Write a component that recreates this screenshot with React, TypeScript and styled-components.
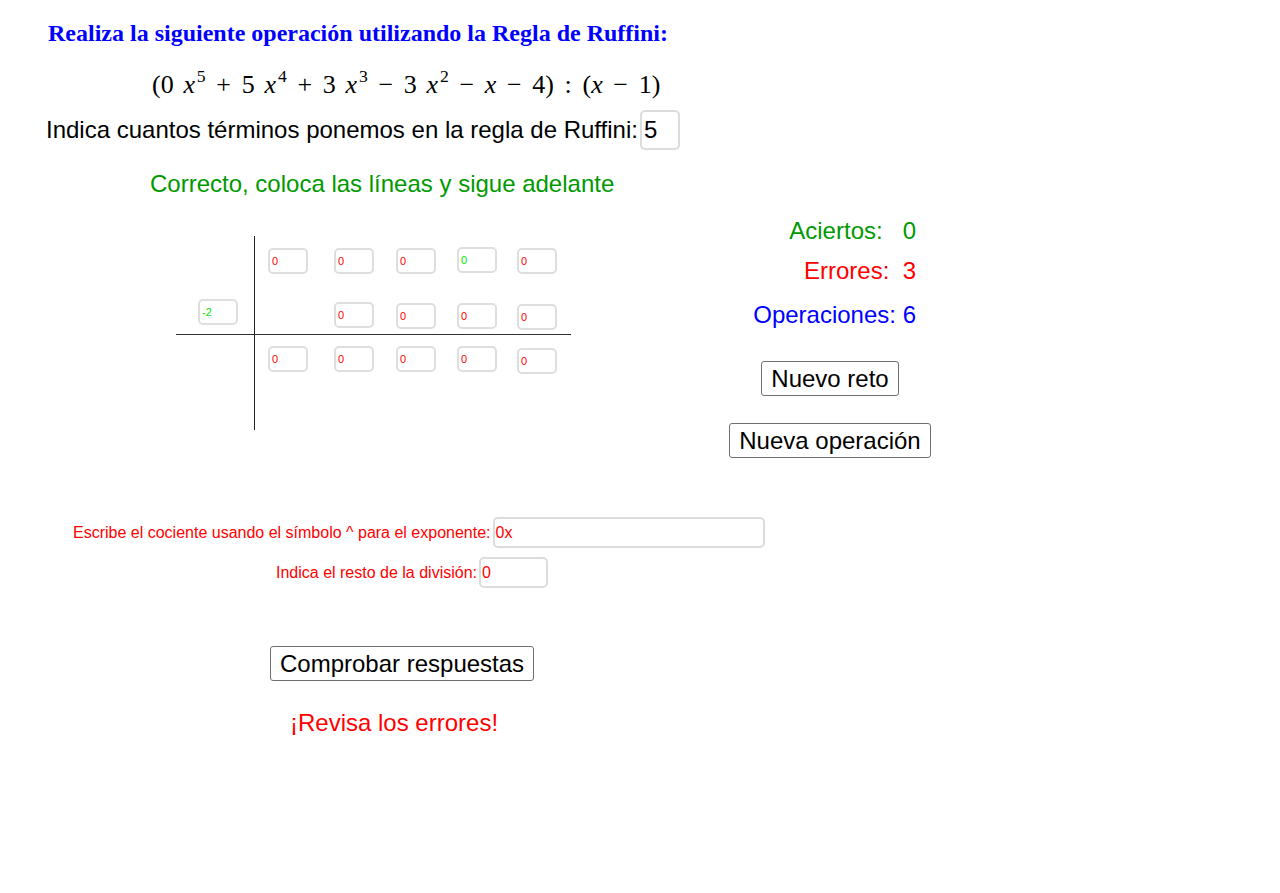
import React from 'react';
import styled, { createGlobalStyle } from 'styled-components';

const GlobalStyle = createGlobalStyle`
  html, body {
    margin: 0;
    padding: 0;
    background: #fff;
  }
  body {
    font-family: "Liberation Sans", Arial, sans-serif;
  }
`;

const Page = styled.div`
  width: 1280px;
  height: 893px;
  overflow: hidden;
  background: #fff;
  display: flex;
  flex-direction: column;
`;

const Title = styled.h1`
  margin: 21px 0 0 48px;
  font-family: "Liberation Serif", "Times New Roman", serif;
  font-weight: bold;
  font-size: 24px;
  line-height: 24px;
  color: #0000ff;
`;

const Formula = styled.div`
  margin: 23px 0 0 152px;
  height: 34px;
  white-space: nowrap;
  font-family: "Liberation Serif", "Times New Roman", serif;
  font-size: 26px;
  line-height: 34px;
  color: #000;
`;

const Var = styled.span<{ $gap?: boolean }>`
  font-style: italic;
  margin-left: ${(p) => (p.$gap ? '0.38em' : '0')};
`;

const Sup = styled.sup`
  font-size: 0.68em;
  line-height: 0;
  vertical-align: 0.62em;
  margin-left: 0.1em;
`;

const Op = styled.span`
  margin: 0 0.41em;
`;

const TermsRow = styled.div`
  margin: 8px 0 0 46px;
  display: flex;
  align-items: center;
  height: 40px;
  font-size: 24px;
  color: #000;
`;

const NumberBox = styled.div<{ $width: number; $color?: string }>`
  box-sizing: border-box;
  width: ${(p) => p.$width}px;
  height: 40px;
  border: 2px solid #dcdcdc;
  border-radius: 5px;
  display: flex;
  align-items: center;
  padding-left: 2px;
  font-size: 24px;
  color: ${(p) => p.$color ?? '#000'};
  margin-left: 2px;
`;

const Feedback = styled.div<{ $color: string }>`
  margin: 22px 0 0 150px;
  font-size: 24px;
  line-height: 24px;
  color: ${(p) => p.$color};
`;

const Workspace = styled.div`
  margin-top: 19px;
  display: flex;
  align-items: flex-start;
`;

const Diagram = styled.div`
  margin: 21px 0 0 176px;
  display: grid;
  grid-template-columns: 78px 317px;
  grid-template-rows: 98px 96px;
`;

const Quadrant = styled.div<{ $left?: boolean; $top?: boolean }>`
  box-sizing: border-box;
  border-left: ${(p) => (p.$left ? '1px solid #222' : 'none')};
  border-top: ${(p) => (p.$top ? '1px solid #333' : 'none')};
  display: flex;
  flex-direction: column;
`;

const DivisorSlot = styled.div`
  margin: 63px 0 0 22px;
`;

const CellRow = styled.div<{ $top: number }>`
  margin-top: ${(p) => p.$top}px;
  padding-left: 13px;
  display: grid;
  grid-template-columns: 66px 62px 61px 60px 40px;
`;

const Cell = styled.div<{ $color: string; $dy?: number }>`
  box-sizing: border-box;
  width: 40px;
  height: 26px;
  border: 2px solid #dedede;
  border-radius: 5px;
  padding: 0 0 0 2px;
  display: flex;
  align-items: center;
  font-size: 11px;
  line-height: 11px;
  color: ${(p) => p.$color};
  transform: translateY(${(p) => p.$dy ?? 0}px);
  background: #fff;
`;

const Stats = styled.div`
  margin-left: 129px;
  width: 260px;
  display: flex;
  flex-direction: column;
  align-items: center;
`;

const StatLine = styled.div<{ $color: string; $top: number }>`
  align-self: stretch;
  box-sizing: border-box;
  padding-right: 44px;
  margin-top: ${(p) => p.$top}px;
  text-align: right;
  white-space: pre;
  font-size: 24px;
  line-height: 30px;
  color: ${(p) => p.$color};
`;

const ActionButton = styled.button<{ $top: number }>`
  margin-top: ${(p) => p.$top}px;
  height: 35px;
  padding: 0 9px;
  border: 1px solid #707070;
  border-radius: 3px;
  background: #fff;
  font-family: "Liberation Sans", Arial, sans-serif;
  font-size: 24px;
  color: #000;
  cursor: pointer;
`;

const AnswerRow = styled.div<{ $left: number; $top: number }>`
  margin: ${(p) => p.$top}px 0 0 ${(p) => p.$left}px;
  display: flex;
  align-items: center;
  height: 31px;
  font-size: 16px;
  color: #ff0000;
`;

const TextField = styled.div<{ $width: number }>`
  box-sizing: border-box;
  width: ${(p) => p.$width}px;
  height: 31px;
  margin-left: 2px;
  border: 2px solid #dcdcdc;
  border-radius: 5px;
  padding-left: 1px;
  display: flex;
  align-items: center;
  font-size: 16px;
  color: #ff0000;
`;

const CheckArea = styled.div`
  margin: 58px 0 0 270px;
  display: flex;
`;

const ResultMessage = styled.div`
  margin: 29px 0 0 290px;
  font-size: 24px;
  line-height: 26px;
  color: #ff0000;
`;

const RED = '#ff0000';
const LIME = '#00e600';

type CellData = { v: string; c: string; dy?: number };

const rowOne: CellData[] = [
  { v: '0', c: RED },
  { v: '0', c: RED },
  { v: '0', c: RED },
  { v: '0', c: LIME, dy: -1 },
  { v: '0', c: RED },
];

const rowTwo: CellData[] = [
  { v: '0', c: RED, dy: -1 },
  { v: '0', c: RED },
  { v: '0', c: RED },
  { v: '0', c: RED, dy: 1 },
];

const rowThree: CellData[] = [
  { v: '0', c: RED },
  { v: '0', c: RED },
  { v: '0', c: RED },
  { v: '0', c: RED },
  { v: '0', c: RED, dy: 2 },
];

const renderCells = (cells: CellData[]) =>
  cells.map((cell, i) => (
    <Cell key={i} $color={cell.c} $dy={cell.dy}>
      {cell.v}
    </Cell>
  ));

const App: React.FC = () => {
  return (
    <>
      <GlobalStyle />
      <Page>
        <Title>Realiza la siguiente operación utilizando la Regla de Ruffini:</Title>

        <Formula>
          (0<Var $gap>x</Var>
          <Sup>5</Sup>
          <Op>+</Op>5<Var $gap>x</Var>
          <Sup>4</Sup>
          <Op>+</Op>3<Var $gap>x</Var>
          <Sup>3</Sup>
          <Op>−</Op>3<Var $gap>x</Var>
          <Sup>2</Sup>
          <Op>−</Op>
          <Var>x</Var>
          <Op>−</Op>4)<Op>:</Op>(<Var>x</Var>
          <Op>−</Op>1)
        </Formula>

        <TermsRow>
          Indica cuantos términos ponemos en la regla de Ruffini:
          <NumberBox $width={40}>5</NumberBox>
        </TermsRow>

        <Feedback $color="#009900">Correcto, coloca las líneas y sigue adelante</Feedback>

        <Workspace>
          <Diagram>
            <Quadrant>
              <DivisorSlot>
                <Cell $color={LIME}>-2</Cell>
              </DivisorSlot>
            </Quadrant>
            <Quadrant $left>
              <CellRow $top={12}>{renderCells(rowOne)}</CellRow>
              <CellRow $top={29}>
                <span />
                {renderCells(rowTwo)}
              </CellRow>
            </Quadrant>
            <Quadrant $top />
            <Quadrant $left $top>
              <CellRow $top={11}>{renderCells(rowThree)}</CellRow>
            </Quadrant>
          </Diagram>

          <Stats>
            <StatLine $color="#009900" $top={1}>{'Aciertos:   0'}</StatLine>
            <StatLine $color="#ff0000" $top={10}>{'Errores:  3'}</StatLine>
            <StatLine $color="#0000ff" $top={14}>{'Operaciones: 6'}</StatLine>
            <ActionButton $top={31}>Nuevo reto</ActionButton>
            <ActionButton $top={27}>Nueva operación</ActionButton>
          </Stats>
        </Workspace>

        <AnswerRow $left={73} $top={59}>
          Escribe el cociente usando el símbolo ^ para el exponente:
          <TextField $width={272}>0x</TextField>
        </AnswerRow>
        <AnswerRow $left={276} $top={9}>
          Indica el resto de la división:
          <TextField $width={69}>0</TextField>
        </AnswerRow>

        <CheckArea>
          <ActionButton $top={0}>Comprobar respuestas</ActionButton>
        </CheckArea>

        <ResultMessage>¡Revisa los errores!</ResultMessage>
      </Page>
    </>
  );
};

export default App;
